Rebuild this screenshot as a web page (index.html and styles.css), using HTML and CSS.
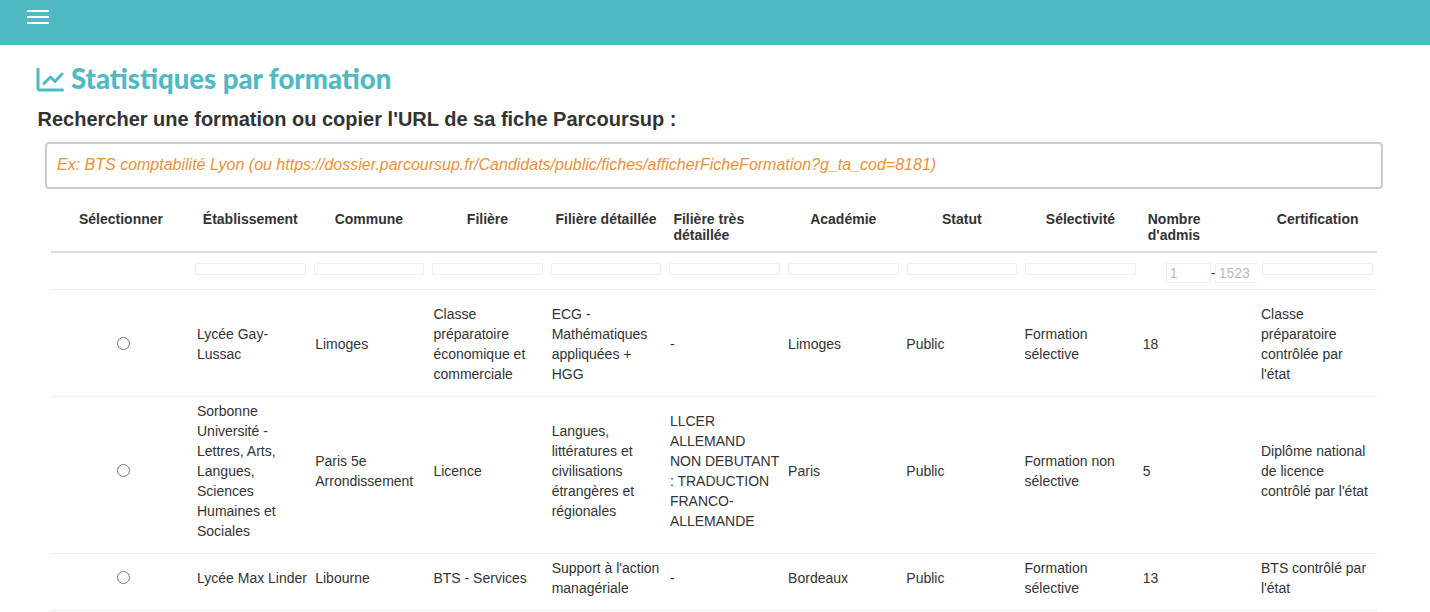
FILE: index.html
```html
<!DOCTYPE html>
<html lang="fr">
<head>
  <meta charset="UTF-8">
  <title>Statistiques par formation</title>
  <link rel="stylesheet" href="styles.css">
</head>
<body>

  <nav class="navbar">
    <button class="menu-btn" aria-label="Menu">
      <span></span>
      <span></span>
      <span></span>
    </button>
  </nav>

  <main class="content">
    <h1 class="page-title">
      <svg class="title-icon" width="28" height="25" viewBox="0 0 28 25" fill="none" stroke="currentColor" stroke-width="3" stroke-linecap="round" stroke-linejoin="round">
        <path d="M2 2V21.5a1.5 1.5 0 0 0 1.5 1.5H26.5"/>
        <path d="M8 16.5L14.5 10L19 14.5L26 7"/>
      </svg>
      Statistiques par formation
    </h1>
    <h2 class="search-label">Rechercher une formation ou copier l'URL de sa fiche Parcoursup :</h2>
    <input class="search-input" type="text" placeholder="Ex: BTS comptabilité Lyon (ou https://dossier.parcoursup.fr/Candidats/public/fiches/afficherFicheFormation?g_ta_cod=8181)">

    <table class="results-head">
      <thead>
        <tr class="head-row">
          <th class="col-select">Sélectionner</th>
          <th>Établissement</th>
          <th>Commune</th>
          <th>Filière</th>
          <th>Filière détaillée</th>
          <th class="left">Filière très détaillée</th>
          <th>Académie</th>
          <th>Statut</th>
          <th>Sélectivité</th>
          <th class="left">Nombre d'admis</th>
          <th>Certification</th>
        </tr>
        <tr class="filter-row">
          <td></td>
          <td><input class="filter" type="text"></td>
          <td><input class="filter" type="text"></td>
          <td><input class="filter" type="text"></td>
          <td><input class="filter" type="text"></td>
          <td><input class="filter" type="text"></td>
          <td><input class="filter" type="text"></td>
          <td><input class="filter" type="text"></td>
          <td><input class="filter" type="text"></td>
          <td>
            <div class="range">
              <input class="range-min" type="text" placeholder="1">
              <span class="range-dash">-</span>
              <input class="range-max" type="text" placeholder="1523">
            </div>
          </td>
          <td><input class="filter" type="text"></td>
        </tr>
      </thead>
    </table>

    <table class="results-body">
      <colgroup>
        <col class="col-select">
        <col span="9">
        <col class="col-last">
      </colgroup>
      <tbody>
        <tr class="row-first">
          <td class="cell-radio"><input type="radio" name="formation"></td>
          <td>Lycée Gay-<br>Lussac</td>
          <td>Limoges</td>
          <td>Classe préparatoire économique et commerciale</td>
          <td>ECG - Mathématiques appliquées + HGG</td>
          <td>-</td>
          <td>Limoges</td>
          <td>Public</td>
          <td>Formation sélective</td>
          <td>18</td>
          <td class="cell-last">Classe préparatoire contrôlée par l'état</td>
        </tr>
        <tr>
          <td class="cell-radio"><input type="radio" name="formation"></td>
          <td>Sorbonne Université - Lettres, Arts, Langues, Sciences Humaines et Sociales</td>
          <td>Paris 5e Arrondissement</td>
          <td>Licence</td>
          <td>Langues, littératures et civilisations étrangères et régionales</td>
          <td>LLCER<br>ALLEMAND<br>NON DEBUTANT<br>: TRADUCTION<br>FRANCO-<br>ALLEMANDE</td>
          <td>Paris</td>
          <td>Public</td>
          <td>Formation non sélective</td>
          <td>5</td>
          <td class="cell-last">Diplôme national de licence contrôlé par l'état</td>
        </tr>
        <tr>
          <td class="cell-radio"><input type="radio" name="formation"></td>
          <td>Lycée Max Linder</td>
          <td>Libourne</td>
          <td>BTS - Services</td>
          <td>Support à l'action managériale</td>
          <td>-</td>
          <td>Bordeaux</td>
          <td>Public</td>
          <td>Formation sélective</td>
          <td>13</td>
          <td class="cell-last">BTS contrôlé par l'état</td>
        </tr>
      </tbody>
    </table>
  </main>

</body>
</html>
```

FILE: styles.css
```css
* {
  box-sizing: border-box;
}

body {
  margin: 0;
  font-family: "Liberation Sans", Arial, sans-serif;
  font-size: 14px;
  line-height: 20px;
  color: #333;
  background: white;
  overflow: hidden;
}

.navbar {
  height: 45px;
  background: #4fb9c4;
  padding: 10px 27px;
}

.menu-btn {
  display: flex;
  flex-direction: column;
  gap: 4px;
  width: 22px;
  padding: 0;
  background: none;
  border: none;
}

.menu-btn span {
  display: block;
  height: 2px;
  background: white;
}

.content {
  padding: 20px 47px 0 37px;
}

.page-title {
  display: flex;
  align-items: center;
  gap: 7px;
  margin: 0 0 0 -1px;
  height: 28px;
  font-family: Lato, sans-serif;
  font-size: 27.5px;
  font-weight: 900;
  line-height: 28px;
  color: #4fb9c4;
}

.title-icon {
  flex: none;
}

.search-label {
  margin: 14px 0 0 0.5px;
  font-size: 20px;
  font-weight: bold;
  line-height: 24px;
}

.search-input {
  display: block;
  width: 1338px;
  height: 47px;
  margin: 11px 0 0 8px;
  padding: 0 10px 2px;
  border: 2px solid #ccc;
  border-radius: 4px;
  font-family: inherit;
  font-size: 16px;
}

.search-input::placeholder {
  font-style: italic;
  color: #e8923a;
  opacity: 1;
}

.results-head,
.results-body {
  width: 1326px;
  margin-left: 14px;
  table-layout: fixed;
  border-collapse: collapse;
}

.results-head {
  margin-top: 10px;
}

.results-head th {
  height: 53px;
  padding: 12px 6px 0;
  font-size: 14px;
  line-height: 16px;
  text-align: center;
  vertical-align: top;
  border-bottom: 2px solid #ddd;
}

.results-head th.left {
  padding-left: 8px;
  text-align: left;
}

.col-select {
  width: 140px;
}

.col-last {
  width: 122px;
}

/* filters under the headers */
.filter-row td {
  height: 37px;
  padding: 10px 4px 0;
  vertical-align: top;
  border-bottom: 1px solid #eee;
}

.filter {
  display: block;
  width: 100%;
  height: 12px;
  padding: 0;
  border: 1px solid #f0f0f0;
  border-radius: 2px;
}

.range {
  display: flex;
  align-items: center;
  width: 145px;
  margin-left: 22px;
}

.range input {
  height: 20px;
  padding: 0 3px;
  border: 1px solid #f0f0f0;
  font-family: inherit;
  font-size: 14px;
}

.range input::placeholder {
  color: #bbb;
  opacity: 1;
}

.range-min {
  width: 45px;
}

.range-dash {
  width: 4px;
  line-height: 16px;
  color: #333;
}

.range-max {
  width: 42px;
  border-right: none !important;
}

.results-body td {
  padding: 4px 0 12px 6px;
  vertical-align: middle;
  border-bottom: 1px solid #eee;
}

.results-body .row-first td {
  padding-top: 14px;
}

.results-body .cell-radio {
  padding-left: 0;
  padding-bottom: 14px;
  text-align: center;
}

.results-body .cell-last {
  padding-right: 6px;
}

.cell-radio input {
  margin: 0 0 0 5px;
  vertical-align: middle;
}
```
